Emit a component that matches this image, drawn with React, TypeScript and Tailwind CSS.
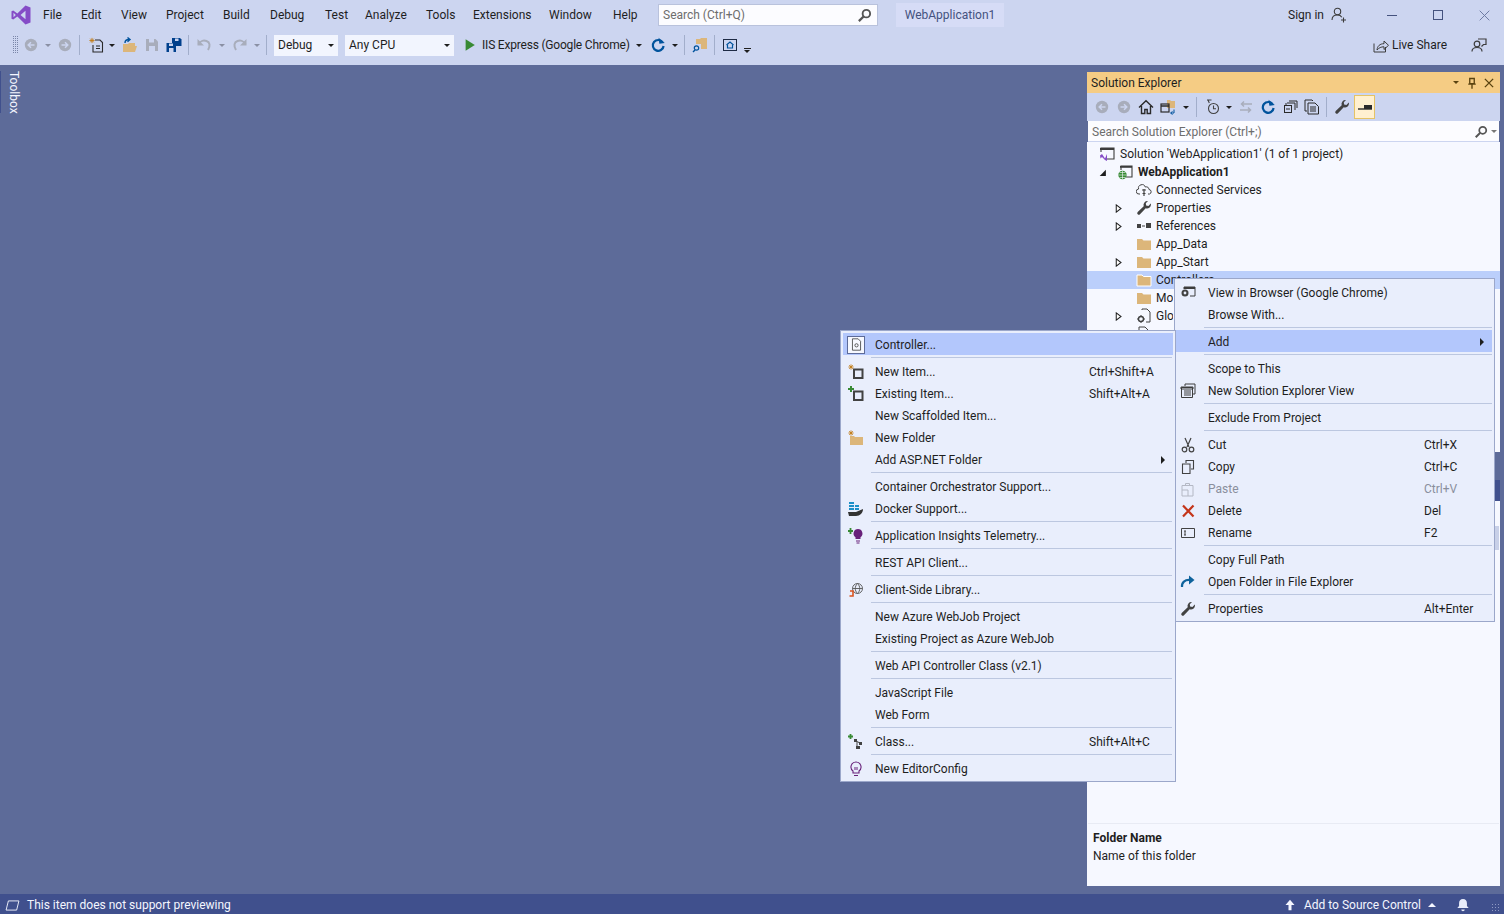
import { ReactNode } from 'react';

const FONT = 'font-["Roboto",sans-serif]';

function Icon({ children, className = 'w-4 h-4' }: { children: ReactNode; className?: string }) {
  return (
    <svg viewBox="0 0 16 16" className={`${className} shrink-0`} fill="none">
      {children}
    </svg>
  );
}

function Slot({ children, className }: { children?: ReactNode; className: string }) {
  return <div className={`flex items-center justify-center shrink-0 ${className}`}>{children}</div>;
}

function Caret({ className = 'w-[10px]', color = 'border-t-[#1e1e1e]' }: { className?: string; color?: string }) {
  return (
    <Slot className={className}>
      <span className={`w-0 h-0 border-x-[3px] border-x-transparent border-t-[3px] ${color}`} />
    </Slot>
  );
}

function Sep({ className = '' }: { className?: string }) {
  return (
    <Slot className={`w-[6px] ${className}`}>
      <span className="block w-px h-[20px] bg-[#a2aecb]" />
    </Slot>
  );
}

function Nav({ forward }: { forward?: boolean }) {
  return (
    <Icon>
      <circle cx="8" cy="8" r="6.2" fill="#a8adbb" />
      <path d={forward ? 'M4.5 8h6M8 5.2 10.8 8 8 10.8' : 'M11.5 8h-6M8 5.2 5.2 8 8 10.8'} stroke="#ccd5f0" strokeWidth="1.5" />
    </Icon>
  );
}

function Spark({ x = 3, y = 3 }: { x?: number; y?: number }) {
  return (
    <path
      d={`M${x} ${y - 2.6}v5.2M${x - 2.6} ${y}h5.2M${x - 1.8} ${y - 1.8}l3.6 3.6M${x - 1.8} ${y + 1.8}l3.6-3.6`}
      stroke="#c27d1a"
      strokeWidth="0.9"
    />
  );
}

function Wrench({ color = '#424242' }: { color?: string }) {
  return (
    <Icon>
      <path
        d="M15 4.3a4 4 0 0 1-5.3 3.9L4 14.2a1.6 1.6 0 0 1-2.3-2.3l6-5.7A4 4 0 0 1 12 1l-2.2 2.3.3 2.3 2.3.3L14.8 3.6c.1.2.2.5.2.7z"
        fill={color}
      />
    </Icon>
  );
}

function Refresh() {
  return (
    <Icon>
      <path d="M12.6 5.2A5.4 5.4 0 1 0 13.6 9" stroke="#00539c" strokeWidth="2.2" />
      <path d="M9 .8v6h5.4z" fill="#00539c" transform="rotate(-8 9 4)" />
    </Icon>
  );
}

function Folder({ selected }: { selected?: boolean }) {
  return (
    <Icon>
      <path d="M1 3h5l1.500 1.500H15V14H1z" fill="#dcb67a" stroke={selected ? '#ffffff' : 'none'} />
    </Icon>
  );
}

function Expander({ open }: { open?: boolean }) {
  return (
    <Icon className="w-[9px] h-[9px]">
      {open ? (
        <path d="M14 3v11H3z" fill="#1e1e1e" />
      ) : (
        <path d="M4 1.500 12.500 8 4 14.500z" fill="#fff" stroke="#1e1e1e" strokeWidth="1.800" />
      )}
    </Icon>
  );
}

function Gripper() {
  const dots = [];
  for (let y = 0; y < 9; y++) {
    dots.push(<rect key={`a${y}`} x="0" y={y * 2} width="1" height="1" fill="#7a86a8" />);
    dots.push(<rect key={`b${y}`} x="2" y={y * 2} width="1" height="1" fill="#7a86a8" />);
    dots.push(<rect key={`c${y}`} x="4" y={y * 2} width="1" height="1" fill="#7a86a8" />);
  }
  return (
    <svg viewBox="0 0 5 18" className="w-[5px] h-[18px]">
      {dots}
    </svg>
  );
}

function MenuBar() {
  const items = [
    ['File', 'w-[38px]'],
    ['Edit', 'w-[40px]'],
    ['View', 'w-[45px]'],
    ['Project', 'w-[57px]'],
    ['Build', 'w-[47px]'],
    ['Debug', 'w-[55px]'],
    ['Test', 'w-[40px]'],
    ['Analyze', 'w-[61px]'],
    ['Tools', 'w-[47px]'],
    ['Extensions', 'w-[76px]'],
    ['Window', 'w-[64px]'],
    ['Help', 'w-[45px]'],
  ];
  return (
    <div className="flex items-center h-[30px]">
      <svg viewBox="0 0 24 24" className="w-[20px] h-[20px] ml-[11px] mr-[12px] shrink-0">
        <path
          fillRule="evenodd"
          d="M17.4.6 7.6 10.2 2.7 6.5.6 7.5v9l2.1 1 4.9-3.7 9.8 9.6L23.4 21V3zM17.4 7v10l-6-5zM3 9.4 5.8 12 3 14.6z"
          fill="#854cc7"
        />
      </svg>
      {items.map(([label, width]) => (
        <span key={label} className={`${width} text-[#1e1e1e]`}>
          {label}
        </span>
      ))}
      <div className="w-[220px] h-[22px] bg-[#fcfcff] border border-[#b9c2dc] flex items-center justify-between pl-[4px] pr-[5px] text-[#6d6d6d]">
        <span>Search (Ctrl+Q)</span>
        <Icon className="w-[15px] h-[15px]">
          <circle cx="10" cy="6" r="4" stroke="#555" strokeWidth="2" />
          <path d="M7 9 2 14" stroke="#555" strokeWidth="2.400" />
        </Icon>
      </div>
      <div className="ml-[18px] w-[108px] h-[24px] bg-[#d6dcf6] text-[#44527e] flex items-center justify-center">WebApplication1</div>
      <div className="flex-1" />
      <span className="text-[#1e1e1e]">Sign in</span>
      <Icon className="w-[16px] h-[16px] ml-[7px]">
        <circle cx="6.500" cy="4.500" r="3.200" stroke="#3c3c3c" strokeWidth="1.100" />
        <path d="M1 13c0-3.500 2-5 5.500-5 2 0 3.500.8 4.300 2.200M12.500 10.500v5M10 13h5" stroke="#3c3c3c" strokeWidth="1.100" />
      </Icon>
      <Slot className="w-[46px] ml-[22px]">
        <span className="block w-[10px] h-px bg-[#44527e]" />
      </Slot>
      <Slot className="w-[46px]">
        <span className="block w-[10px] h-[10px] border border-[#44527e]" />
      </Slot>
      <Slot className="w-[46px] -mr-[3px]">
        <Icon className="w-[11px] h-[11px]">
          <path d="M1 1l14 14M15 1 1 15" stroke="#6a78a0" strokeWidth="1.400" />
        </Icon>
      </Slot>
    </div>
  );
}

function ToolBar() {
  return (
    <div className="flex items-center h-[30px]">
      <Slot className="w-[10px] ml-[10px]">
        <Gripper />
      </Slot>
      <Slot className="w-[22px]">
        <Nav />
      </Slot>
      <Caret className="w-[12px]" color="border-t-[#8a90a4]" />
      <Slot className="w-[22px]">
        <Nav forward />
      </Slot>
      <Sep />
      <Slot className="w-[22px] ml-[3px]">
        <Icon>
          <Spark x={4} y={3.500} />
          <path d="M7 3h5l2.500 2.500V15H5V8" stroke="#2a2a2a" strokeWidth="1.100" />
          <path d="M8 9h4M8 11.500h4" stroke="#2a2a2a" />
        </Icon>
      </Slot>
      <Caret />
      <Slot className="w-[22px] ml-[2px]">
        <Icon>
          <path d="M1 7h5l1-1h6v3h2l-2 6H1z" fill="#dcb67a" />
          <path d="M3 6c0-2.500 1.500-3.500 4-3.500M5.500 .5 8 2.600 5.500 4.700" stroke="#00539c" strokeWidth="1.400" />
        </Icon>
      </Slot>
      <Slot className="w-[22px]">
        <Icon>
          <path d="M2 2h9.500L14 4.500V14H2z" fill="#a8adbb" />
          <path d="M5 2h5v3.500H5zM5 9h6v5H5z" fill="#ccd5f0" />
        </Icon>
      </Slot>
      <Slot className="w-[22px]">
        <Icon>
          <path d="M6 1h8l1.500 1.500V9H6z" fill="#00408c" />
          <path d="M.5 6h8L10 7.500V15H.5z" fill="#00408c" />
          <path d="M9 1.500h3.500V4H9zM3 6.500h4V9H3zM3 11h4.500v4H3z" fill="#ccd5f0" />
        </Icon>
      </Slot>
      <Sep />
      <Slot className="w-[22px] ml-[2px]">
        <Icon>
          <path d="M2.500 7.500C4 4 7.500 3 10.500 4c3.500 1.200 4 5 1.500 9" stroke="#a8adbb" strokeWidth="2" />
          <path d="M1.500 2v6.500H8z" fill="#a8adbb" />
        </Icon>
      </Slot>
      <Caret className="w-[10px] ml-[2px]" color="border-t-[#8a90a4]" />
      <Slot className="w-[22px] ml-[2px]">
        <Icon>
          <path d="M13.500 7.500C12 4 8.500 3 5.500 4c-3.500 1.200-4 5-1.500 9" stroke="#a8adbb" strokeWidth="2" />
          <path d="M14.500 2v6.500H8z" fill="#a8adbb" />
        </Icon>
      </Slot>
      <Caret className="w-[10px] ml-px" color="border-t-[#8a90a4]" />
      <Sep className="ml-px" />
      <div className="ml-[5px] w-[64px] h-[21px] bg-[#f2f5fe] flex items-center justify-between pl-[4px] text-[#1e1e1e] shrink-0">
        <span>Debug</span>
        <Caret className="w-[14px]" />
      </div>
      <div className="ml-[7px] w-[109px] h-[21px] bg-[#f2f5fe] flex items-center justify-between pl-[4px] text-[#1e1e1e] shrink-0">
        <span>Any CPU</span>
        <Caret className="w-[14px]" />
      </div>
      <Slot className="w-[16px] ml-[8px]">
        <Icon className="w-[14px] h-[14px]">
          <path d="M3 1.500v13L13.500 8z" fill="#388a34" />
        </Icon>
      </Slot>
      <span className="w-[152px] ml-[4px] text-[#1e1e1e] tracking-[-0.2px] whitespace-nowrap shrink-0">IIS Express (Google Chrome)</span>
      <Caret />
      <Slot className="w-[22px] ml-[3px]">
        <Refresh />
      </Slot>
      <Caret className="w-[10px] ml-px" />
      <Sep className="ml-px" />
      <Slot className="w-[22px] ml-[2px]">
        <Icon>
          <path d="M4 2h4l1-1h6v11H9V7H4z" fill="#dcb67a" />
          <circle cx="4.500" cy="11" r="2.200" stroke="#00539c" strokeWidth="1.200" />
          <path d="M3 13 1 15" stroke="#00539c" strokeWidth="1.400" />
        </Icon>
      </Slot>
      <Sep />
      <Slot className="w-[22px] ml-[2px]">
        <Icon>
          <rect x="1.500" y="2.500" width="13" height="11" stroke="#1e2a44" />
          <path d="M4.500 8 8 5l3.500 3M5.500 8v3h5V8" stroke="#00539c" strokeWidth="1.200" />
        </Icon>
      </Slot>
      <div className="ml-px w-[10px] flex flex-col items-center self-end mb-[7px] gap-px">
        <span className="block w-[7px] h-px bg-[#1e1e1e]" />
        <span className="w-0 h-0 border-x-[3.500px] border-x-transparent border-t-[3.500px] border-t-[#1e1e1e]" />
      </div>
      <div className="flex-1" />
      <Icon className="w-[16px] h-[16px]">
        <path d="M1 6.500V15h11.500v-5" stroke="#3c3c3c" />
        <path d="M4 13c.3-4 3-6.300 7-6.300V4l4.500 4.300-4.500 4.200v-2.700c-3 0-5 1-7 3.200z" stroke="#3c3c3c" />
      </Icon>
      <span className="ml-[3px] text-[#1e1e1e]">Live Share</span>
      <Icon className="w-[16px] h-[16px] ml-[24px] mr-[17px]">
        <circle cx="6" cy="7" r="2.800" stroke="#3c3c3c" strokeWidth="1.200" />
        <path d="M1 14.500c0-2.500 2-4 5-4s5 1.500 5 4M7 2h8v5.500h-2.500L10.500 9.500" stroke="#3c3c3c" strokeWidth="1.200" />
      </Icon>
    </div>
  );
}

function PanelToolbar() {
  return (
    <div className="flex items-center h-[28px] bg-[#ccd5f0] pl-[4px] shrink-0">
      <Slot className="w-[22px]">
        <Nav />
      </Slot>
      <Slot className="w-[22px]">
        <Nav forward />
      </Slot>
      <Slot className="w-[22px]">
        <Icon>
          <path d="M1 8.500 8 1.800l7 6.700M3.500 7v7.500h3.300v-4h2.400v4h3.300V7" stroke="#2a2a2a" strokeWidth="1.400" />
        </Icon>
      </Slot>
      <Slot className="w-[22px]">
        <Icon>
          <path d="M7 3V1h3l1 1h4v7H7z" fill="#dcb67a" />
          <rect x="1" y="5" width="8" height="8" stroke="#2a2a2a" strokeWidth="1.200" />
          <path d="M1 7h8" stroke="#2a2a2a" strokeWidth="1.500" />
          <path d="M14 10.500V14h-3M12.500 12.500 10.500 14l2 1.500" stroke="#00539c" />
        </Icon>
      </Slot>
      <Caret className="w-[14px]" />
      <Sep />
      <Slot className="w-[22px] ml-[3px]">
        <Icon>
          <circle cx="8.500" cy="9.500" r="5" stroke="#424242" strokeWidth="1.100" />
          <path d="M8.500 6.500v3.300h2.500M2 1h4.500M3 1l1.300 3" stroke="#424242" strokeWidth="1.100" />
        </Icon>
      </Slot>
      <Caret className="w-[10px]" />
      <Slot className="w-[22px] ml-[1px]">
        <Icon>
          <path d="M14 5H4M6 2.500 3.500 5 6 7.500M2 11h10M10 8.500l2.500 2.500L10 13.500" stroke="#a8adbb" strokeWidth="1.500" />
        </Icon>
      </Slot>
      <Slot className="w-[22px]">
        <Refresh />
      </Slot>
      <Slot className="w-[22px]">
        <Icon>
          <rect x="2.500" y="6.500" width="7" height="7" stroke="#2a2a2a" />
          <path d="M5 4h8v7M4 7V4M7 2h8v7" stroke="#2a2a2a" />
          <path d="M4 10h4" stroke="#2a2a2a" />
        </Icon>
      </Slot>
      <Slot className="w-[22px]">
        <Icon>
          <path d="M3 12H1V1h7l1 1" stroke="#2a2a2a" />
          <path d="M4 4h7l3.500 3.500V15H4z" stroke="#2a2a2a" />
          <path d="M6 8h6M6 10h6M6 12h6" stroke="#2a2a2a" />
        </Icon>
      </Slot>
      <Sep />
      <Slot className="w-[22px] ml-[2px]">
        <Wrench />
      </Slot>
      <Slot className="w-[21px] h-[24px] ml-px bg-[#fff0d0] border border-[#e5c365]">
        <Icon className="w-[16px] h-[16px]">
          <path d="M1 10h14" stroke="#2a2a2a" strokeWidth="1.400" />
          <path d="M7 6h8v4H7z" fill="#2a2a2a" />
        </Icon>
      </Slot>
    </div>
  );
}

type Row = { id: string; label?: string; level: 0 | 1 | 2; expander?: 'open' | 'closed'; icon: ReactNode; bold?: boolean; selected?: boolean; clip?: boolean };

const levels = [
  { pad: 'pl-[2px]', gap: 'ml-0', text: 'ml-[5px]' },
  { pad: 'pl-[10px]', gap: 'ml-[10px]', text: 'ml-[5px]' },
  { pad: 'pl-[26px]', gap: 'ml-[13px]', text: 'ml-[4px]' },
];

const rows: Row[] = [
  {
    id: 'solution',
    label: "Solution 'WebApplication1' (1 of 1 project)",
    level: 0,
    icon: (
      <Icon>
        <path d="M2 6V2h13v11H8" stroke="#3c3c3c" strokeWidth="1.100" />
        <path d="M1 2h14v2H1z" fill="#3c3c3c" />
        <path d="M1 9.500 3 8l3 4.500L8 8v7l-2-1-3-3-1.500 1.500z" fill="#854cc7" />
      </Icon>
    ),
  },
  {
    id: 'project',
    label: 'WebApplication1',
    level: 1,
    expander: 'open',
    bold: true,
    icon: (
      <Icon>
        <path d="M4 6V2h11v11H9" stroke="#3c3c3c" strokeWidth="1.100" />
        <path d="M3 2h12v1.800H3z" fill="#3c3c3c" />
        <circle cx="5.500" cy="11" r="4.200" fill="#388a34" />
        <path d="M1.500 11h8M5.500 7v8M2.500 8.500h6M2.500 13.500h6" stroke="#f6f8ff" strokeWidth="0.600" />
      </Icon>
    ),
  },
  {
    id: 'services',
    label: 'Connected Services',
    level: 2,
    icon: (
      <Icon>
        <path d="M4 12H3a2.500 2.500 0 0 1-.4-5A3.500 3.500 0 0 1 9.300 5 3 3 0 0 1 13 7.500a2.300 2.300 0 0 1 .5 4.500H12" stroke="#424242" />
        <path d="M8 7v7M6 8h4M6.500 11.500h3" stroke="#424242" strokeWidth="1.200" />
      </Icon>
    ),
  },
  { id: 'properties', label: 'Properties', level: 2, expander: 'closed', icon: <Wrench /> },
  {
    id: 'references',
    label: 'References',
    level: 2,
    expander: 'closed',
    icon: (
      <Icon>
        <path d="M1 6h4v4H1zM10 5h5v5h-5z" fill="#424242" />
        <path d="M6 8h3" stroke="#424242" />
      </Icon>
    ),
  },
  { id: 'data', label: 'App_Data', level: 2, icon: <Folder /> },
  { id: 'start', label: 'App_Start', level: 2, expander: 'closed', icon: <Folder /> },
  { id: 'controllers', label: 'Controllers', level: 2, icon: <Folder selected />, selected: true },
  { id: 'models', label: 'Models', level: 2, icon: <Folder />, clip: true },
  {
    id: 'global',
    label: 'Global.asax',
    level: 2,
    expander: 'closed',
    clip: true,
    icon: (
      <Icon>
        <path d="M6 2V1h5l3 3v10h-4" stroke="#424242" />
        <circle cx="5" cy="11" r="2.500" stroke="#424242" strokeWidth="1.400" />
        <path d="M5 7v1.500M5 13.500V15M1 11h1.500M7.500 11H9" stroke="#424242" />
      </Icon>
    ),
  },
  {
    id: 'file',
    level: 2,
    icon: (
      <Icon>
        <path d="M3 15V1h6l4 4v10z" stroke="#424242" />
      </Icon>
    ),
  },
];

function TreeRow({ row }: { row: Row }) {
  const level = levels[row.level];
  return (
    <div className={`flex items-center h-[18px] ${level.pad} ${row.selected ? 'bg-[#bbcffb]' : ''}`}>
      <Slot className="w-[10px]">{row.expander ? <Expander open={row.expander === 'open'} /> : null}</Slot>
      <Slot className={`w-[16px] ${level.gap}`}>{row.icon}</Slot>
      {row.label ? (
        <span
          className={`${level.text} text-[#1e1e1e] whitespace-nowrap ${row.bold ? 'font-bold' : ''} ${row.clip ? 'w-[17px] overflow-hidden' : ''}`}
        >
          {row.label}
        </span>
      ) : null}
    </div>
  );
}

function SolutionExplorer() {
  return (
    <div className="w-[413px] flex flex-col relative">
      <div className="flex items-center h-[21px] bg-[#f5cc84] text-[#1e1e1e] pl-[4px] shrink-0">
        <span>Solution Explorer</span>
        <div className="flex-1" />
        <Caret className="w-[16px]" color="border-t-[#5a4310]" />
        <Icon className="w-[12px] h-[12px] ml-[2px] mr-[5px]">
          <path d="M5 2h6v7H5zM3 9.500h10M8 10v5.500" stroke="#5a4310" strokeWidth="1.800" />
        </Icon>
        <Icon className="w-[12px] h-[12px] mr-[5px]">
          <path d="M2.500 2.500l11 11M13.500 2.500l-11 11" stroke="#5a4310" strokeWidth="1.800" />
        </Icon>
      </div>
      <PanelToolbar />
      <div className="flex items-center h-[21px] mx-px bg-[#fcfcff] pl-[4px] pt-px text-[#6d6d6d] justify-between shrink-0 border-b border-[#ccd5f0]">
        <span>Search Solution Explorer (Ctrl+;)</span>
        <div className="flex items-center">
          <Icon className="w-[14px] h-[14px]">
            <circle cx="10" cy="6" r="4" stroke="#555" strokeWidth="2" />
            <path d="M7 9 2 14" stroke="#555" strokeWidth="2.400" />
          </Icon>
          <Caret className="w-[11px]" color="border-t-[#777]" />
        </div>
      </div>
      <div className="bg-[#f6f8ff] h-[310px] pt-[3px] overflow-hidden shrink-0">
        {rows.map((row) => (
          <TreeRow key={row.id} row={row} />
        ))}
      </div>
      <div className="h-[28px] shrink-0" />
      <div className="h-[21px] bg-[#40508d] shrink-0" />
      <div className="flex-1 bg-[#f6f8ff] flex flex-col justify-end">
        <div className="h-[63px] mx-px border-t border-[#e8ebf4] px-[5px] pt-[5px] text-[#1e1e1e] leading-[18px]">
          <div className="font-bold">Folder Name</div>
          <div>Name of this folder</div>
        </div>
      </div>
      <div className="absolute right-px top-[454px] w-[4px] h-[24px] bg-[#c8d0e8]" />
    </div>
  );
}

type Item = { label?: string; shortcut?: string; icon?: ReactNode; sub?: boolean; active?: boolean; disabled?: boolean; sep?: boolean };

const SEP: Item = { sep: true };

const addMenu: Item[] = [
  {
    label: 'Controller...',
    active: true,
    icon: (
      <div className="w-[18px] h-[18px] bg-[#f6f8ff] border border-[#5d6b99] flex items-center justify-center">
        <Icon className="w-[13px] h-[13px]">
          <path d="M3 1h7l3 3v11H3z" stroke="#3c3c3c" />
          <circle cx="8" cy="9" r="2" stroke="#3c3c3c" />
        </Icon>
      </div>
    ),
  },
  SEP,
  {
    label: 'New Item...',
    shortcut: 'Ctrl+Shift+A',
    icon: (
      <Icon>
        <Spark />
        <path d="M6 5.500h8.500V14H6z" stroke="#424242" strokeWidth="2" />
      </Icon>
    ),
  },
  {
    label: 'Existing Item...',
    shortcut: 'Shift+Alt+A',
    icon: (
      <Icon>
        <path d="M3 0v6M0 3h6" stroke="#388a34" strokeWidth="2" />
        <path d="M6 5.500h8.500V14H6z" stroke="#424242" strokeWidth="2" />
      </Icon>
    ),
  },
  { label: 'New Scaffolded Item...' },
  {
    label: 'New Folder',
    icon: (
      <Icon>
        <path d="M2 6h4l1 1h8v8H2z" fill="#dcb67a" />
        <Spark />
      </Icon>
    ),
  },
  { label: 'Add ASP.NET Folder', sub: true },
  SEP,
  { label: 'Container Orchestrator Support...' },
  {
    label: 'Docker Support...',
    icon: (
      <Icon>
        <path d="M1 1h5v2H1zM1 4h5v2H1zM1 7h5v2H1zM7 4h4v2H7zM7 7h4v2H7z" fill="#1c90c8" />
        <path d="M0 11h8l7-3c0 4-3 7-7 7H1z" fill="#333" />
      </Icon>
    ),
  },
  SEP,
  {
    label: 'Application Insights Telemetry...',
    icon: (
      <Icon>
        <path d="M2.500 0v6M0 3h5" stroke="#388a34" strokeWidth="1.800" />
        <path d="M10 1a4.500 4.500 0 0 1 2.500 8.200V11h-5V9.200A4.500 4.500 0 0 1 10 1z" fill="#68217a" />
        <path d="M8 13h4M8.500 15h3" stroke="#68217a" />
      </Icon>
    ),
  },
  SEP,
  { label: 'REST API Client...' },
  SEP,
  {
    label: 'Client-Side Library...',
    icon: (
      <Icon>
        <circle cx="9.500" cy="6.500" r="5" stroke="#555" strokeWidth="0.900" />
        <path d="M4.500 6.500h10M9.500 1.500c-3 3-3 7 0 10M9.500 1.500c3 3 3 7 0 10" stroke="#555" strokeWidth="0.900" />
        <path d="M2 9h3v5H1.500" stroke="#d9531e" strokeWidth="1.600" />
      </Icon>
    ),
  },
  SEP,
  { label: 'New Azure WebJob Project' },
  { label: 'Existing Project as Azure WebJob' },
  SEP,
  { label: 'Web API Controller Class (v2.1)' },
  SEP,
  { label: 'JavaScript File' },
  { label: 'Web Form' },
  SEP,
  {
    label: 'Class...',
    shortcut: 'Shift+Alt+C',
    icon: (
      <Icon>
        <path d="M2.500 0v5M0 2.500h5" stroke="#388a34" strokeWidth="1.800" />
        <path d="M6 5h3v3H6zM11 8h3v3h-3zM8 12h4v3H8z" fill="#424242" />
        <path d="M8 7l4 2M9 8v5" stroke="#424242" />
      </Icon>
    ),
  },
  SEP,
  {
    label: 'New EditorConfig',
    icon: (
      <Icon>
        <path d="M8 1a5 5 0 0 1 3 9v2H5v-2a5 5 0 0 1 3-9z" stroke="#68217a" strokeWidth="1.100" />
        <path d="M6 14.500h4M7 9V6M9 9V6" stroke="#68217a" />
      </Icon>
    ),
  },
];

const folderMenu: Item[] = [
  {
    label: 'View in Browser (Google Chrome)',
    icon: (
      <Icon>
        <path d="M4 4V2h11v9H10" stroke="#3c3c3c" />
        <path d="M4 2h11v2H4z" fill="#3c3c3c" />
        <circle cx="5" cy="8" r="3.500" fill="#424242" />
        <circle cx="5" cy="8" r="1.400" fill="#e9eefc" />
      </Icon>
    ),
  },
  { label: 'Browse With...' },
  SEP,
  { label: 'Add', active: true, sub: true },
  SEP,
  { label: 'Scope to This' },
  {
    label: 'New Solution Explorer View',
    icon: (
      <Icon>
        <path d="M5 3V1h10v10h-2" stroke="#3c3c3c" />
        <path d="M1.500 4.500h11v10h-11z" stroke="#3c3c3c" />
        <path d="M1 4h12v2H1zM4 8h7M4 10h7M4 12h7" stroke="#3c3c3c" />
      </Icon>
    ),
  },
  SEP,
  { label: 'Exclude From Project' },
  SEP,
  {
    label: 'Cut',
    shortcut: 'Ctrl+X',
    icon: (
      <Icon>
        <path d="M5 1l4 9M11 1l-4 9" stroke="#424242" strokeWidth="1.200" />
        <circle cx="4.500" cy="12.500" r="2.300" stroke="#424242" strokeWidth="1.200" />
        <circle cx="11.500" cy="12.500" r="2.300" stroke="#424242" strokeWidth="1.200" />
      </Icon>
    ),
  },
  {
    label: 'Copy',
    shortcut: 'Ctrl+C',
    icon: (
      <Icon>
        <path d="M6 4V1.500h7.500V10H11" stroke="#424242" strokeWidth="1.100" />
        <path d="M2.500 5h7.500v9.500H2.500z" stroke="#424242" strokeWidth="1.100" />
      </Icon>
    ),
  },
  {
    label: 'Paste',
    shortcut: 'Ctrl+V',
    disabled: true,
    icon: (
      <Icon>
        <path d="M2 4.500h11V15H2zM5.500 4.500V2.500h4v2M2 9h6v6" stroke="#b4b8c4" />
      </Icon>
    ),
  },
  {
    label: 'Delete',
    shortcut: 'Del',
    icon: (
      <Icon>
        <path d="M3 2.500l10.500 11M13.500 2.500 3 13.500" stroke="#c4351a" strokeWidth="2.200" />
      </Icon>
    ),
  },
  {
    label: 'Rename',
    shortcut: 'F2',
    icon: (
      <Icon>
        <path d="M1.500 3.500h13v9h-13z" stroke="#424242" />
        <path d="M4 6h2M4 10h2M5 6v4" stroke="#424242" />
      </Icon>
    ),
  },
  SEP,
  { label: 'Copy Full Path' },
  {
    label: 'Open Folder in File Explorer',
    icon: (
      <Icon>
        <path d="M2 13c-.5-4.500 3-7.500 8-7" stroke="#0e639c" strokeWidth="2.200" />
        <path d="M9 1.500 14.500 6 9 10.500z" fill="#0e639c" />
      </Icon>
    ),
  },
  SEP,
  { label: 'Properties', shortcut: 'Alt+Enter', icon: <Wrench /> },
];

function MenuRow({ item, iconClass, shortcutClass }: { item: Item; iconClass: string; shortcutClass: string }) {
  const color = item.disabled ? 'text-[#8a8f9c]' : 'text-[#1e1e1e]';
  return (
    <div className={`flex items-center h-[22px] pt-px relative whitespace-nowrap ${color} ${item.active ? 'bg-[#b3c7fc]' : ''}`}>
      <Slot className={iconClass}>{item.icon}</Slot>
      <span className="flex-1">{item.label}</span>
      {item.shortcut ? <span className={shortcutClass}>{item.shortcut}</span> : null}
      {item.sub ? (
        <span className="absolute right-[8px] w-0 h-0 border-y-[4px] border-y-transparent border-l-[4px] border-l-[#1e1e1e]" />
      ) : null}
    </div>
  );
}

function ContextMenu({
  items,
  className,
  iconClass,
  sepClass,
  shortcutClass,
}: {
  items: Item[];
  className: string;
  iconClass: string;
  sepClass: string;
  shortcutClass: string;
}) {
  return (
    <div className={`absolute bg-[#e9eefc] border border-[#9ba7ca] ${className}`}>
      {items.map((item, i) =>
        item.sep ? (
          <div key={i} className={`h-[5px] flex items-center ${sepClass}`}>
            <span className="block w-full h-px bg-[#bcc7e0]" />
          </div>
        ) : (
          <MenuRow key={i} item={item} iconClass={iconClass} shortcutClass={shortcutClass} />
        ),
      )}
    </div>
  );
}

export default function App() {
  return (
    <div className={`relative w-[1504px] h-[914px] overflow-hidden flex flex-col bg-[#5d6b99] text-[12px] leading-[16px] ${FONT}`}>
      <div className="h-[65px] bg-[#ccd5f0] shrink-0">
        <MenuBar />
        <ToolBar />
      </div>
      <div className="flex-1 flex min-h-0 pt-[7px] pb-[8px] pr-[4px]">
        <div className="w-[22px] flex items-start -mt-[1px]">
          <span className="block w-[5px] h-[42px] bg-[#40508d]" />
          <span className="ml-[5px] text-[#f4f6ff] [writing-mode:vertical-rl]">Toolbox</span>
        </div>
        <div className="flex-1" />
        <SolutionExplorer />
      </div>
      <div className="h-[20px] bg-[#40508d] text-[#f4f6ff] flex items-center pl-[5px] pt-[2px] shrink-0">
        <svg viewBox="0 0 16 12" className="w-[15px] h-[11px] shrink-0">
          <path d="M3.500 1h11.500l-2.500 10H1z" fill="none" stroke="#f4f6ff" />
        </svg>
        <span className="ml-[7px]">This item does not support previewing</span>
        <div className="flex-1" />
        <Icon className="w-[12px] h-[12px]">
          <path d="M8 1 14 8h-4v7H6V8H2z" fill="#f4f6ff" />
        </Icon>
        <span className="ml-[8px]">Add to Source Control</span>
        <span className="ml-[7px] w-0 h-0 border-x-[4px] border-x-transparent border-b-[4px] border-b-[#f4f6ff]" />
        <Icon className="w-[14px] h-[14px] ml-[20px]">
          <path d="M8 1c3 0 4.500 2 4.500 5v3l2 2.500h-13l2-2.500V6C3.500 3 5 1 8 1zM6 13h4a2 2 0 0 1-4 0z" fill="#e8ecfa" />
        </Icon>
        <span className="ml-[21px] mr-[3px] w-[10px] h-[10px] self-end mb-px bg-[radial-gradient(#8f9ac4_1px,transparent_1px)] bg-[length:3px_3px]" />
      </div>
      <ContextMenu
        items={folderMenu}
        className="left-[1174px] top-[278px] w-[321px] pl-px pr-[2px] py-[2px]"
        iconClass="w-[24px] mr-[8px]"
        sepClass="ml-[28px]"
        shortcutClass="w-[68px]"
      />
      <ContextMenu
        items={addMenu}
        className="left-[840px] top-[330px] w-[336px] p-[2px]"
        iconClass="w-[26px] mr-[6px]"
        sepClass="ml-[28px] mr-px"
        shortcutClass="w-[84px]"
      />
    </div>
  );
}
